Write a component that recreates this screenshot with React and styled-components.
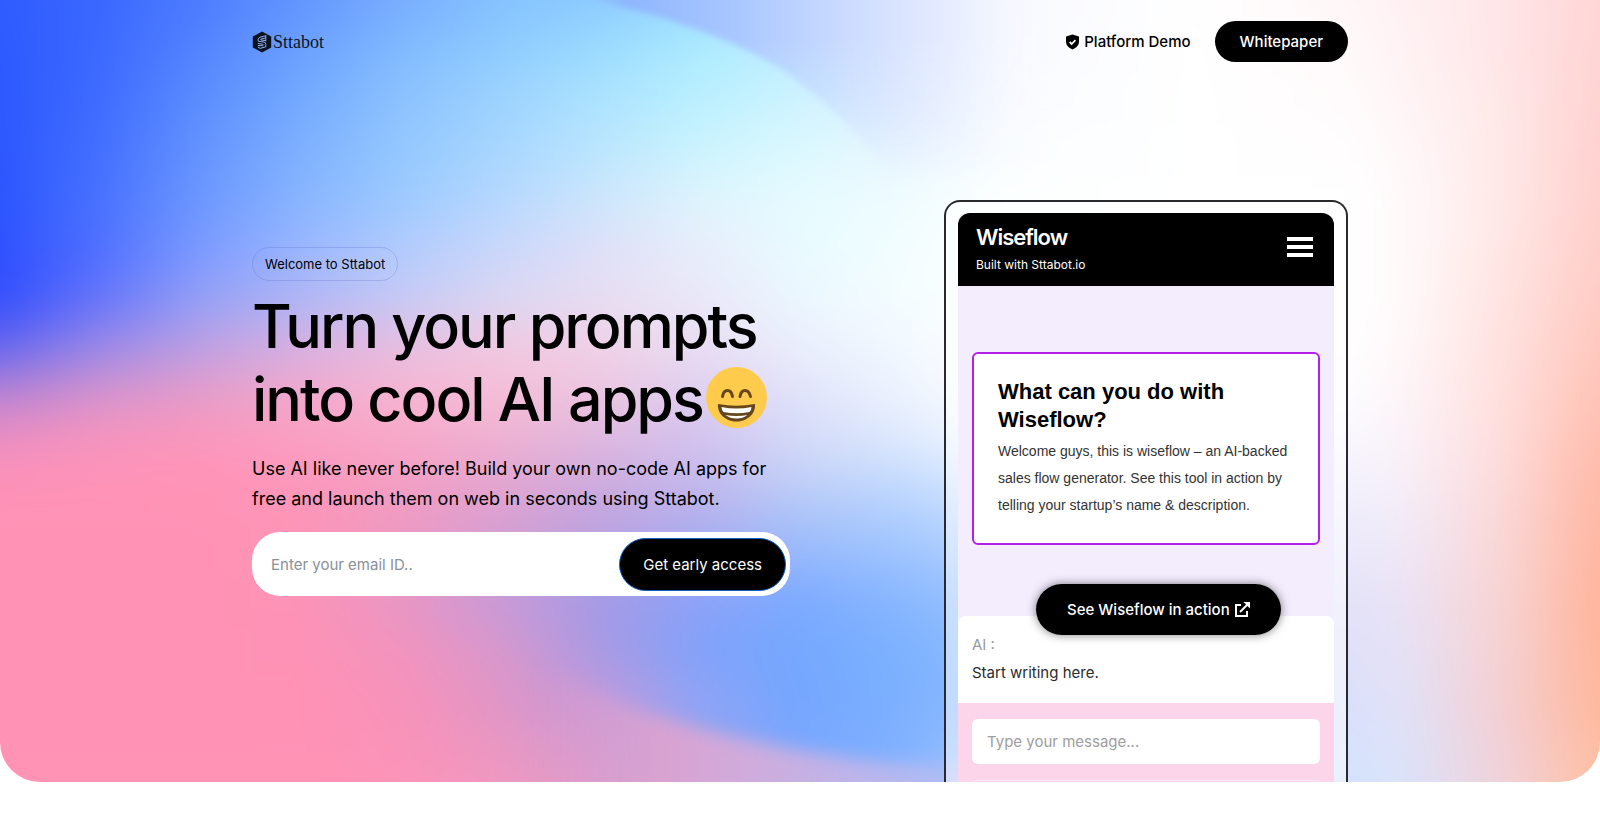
import React from "react";
import styled, { createGlobalStyle } from "styled-components";

const GlobalStyle = createGlobalStyle`
  *, *::before, *::after { box-sizing: border-box; }
  body {
    margin: 0;
    background: #fff;
    color: #000;
    font-family: Inter, "Liberation Sans", sans-serif;
  }
  h1, h2, p { margin: 0; }
  button, input { font: inherit; letter-spacing: inherit; }
`;

/* Colour mesh behind the hero: each row is a horizontal gradient that fades into the next one. */
const COLUMNS = [0, 100, 200, 300, 400, 500, 600, 700, 800, 900, 1000, 1200, 1350, 1400, 1500, 1600];
const MESH = [
  [0, "#2f5cff #3a68ff #4c7cff #6395ff #78acff #84c2ff #8ccbff #a0dcff #c0e4ff #e6edff #f8f9ff #ffffff #fff6f8 #fff1f3 #ffe6e8 #ffd6d6"],
  [50, "#2d5aff #3c69ff #5484ff #6ca0ff #82bbff #8fccff #9cdcff #acecff #c4eeff #e2edff #f9faff #ffffff #fff9fa #fff3f4 #ffe6e8 #ffd4d4"],
  [100, "#2c58ff #3f6cff #5c8dff #74aaff #8cc2ff #9dd3ff #ade3ff #bbf0ff #cef3ff #e2eeff #f9fbff #ffffff #fffbfc #fff5f6 #ffe8e8 #ffd3d2"],
  [150, "#2c57ff #446fff #6493ff #7eb0ff #93c8ff #a8d6ff #bbe6fe #ccf4fe #dcf9ff #e8f5ff #fafdff #ffffff #fffdfe #fff8f9 #ffe9e8 #ffd1cf"],
  [200, "#2c55ff #4872ff #6c98ff #88b5ff #9dcaff #b6d8ff #cee6fc #dff4fd #e6fbff #effcff #fcffff #ffffff #ffffff #fffafb #ffe9e8 #ffd0cd"],
  [250, "#2d50ff #5070ff #7c9aff #9bb6ff #b2cbfd #cbd7fb #dfe0f7 #e8edfb #e8fbff #f2fdff #feffff #ffffff #ffffff #fffafb #ffe7e5 #ffcec9"],
  [300, "#334efc #6675fa #95a0f6 #b0b6f5 #c6caf5 #dbd7f2 #e8ddf2 #eae8f8 #ebf7ff #f4fdff #ffffff #ffffff #ffffff #fffafb #ffe4e2 #ffcbc4"],
  [350, "#6a68ee #9e8ae6 #c0a0e2 #dab0df #eabddf #f2c7df #f0d0e6 #e9dcf2 #eaeefc #f2f8ff #ffffff #ffffff #fffeff #fff8f9 #ffe2e0 #ffc7bd"],
  [400, "#c286d0 #dc94ca #ea9cc6 #f4a8ca #f7b4d0 #f5bcd6 #ebc4e0 #dccdf0 #dfe2fa #ebf2fe #ffffff #ffffff #fdfcff #fdf5f9 #ffe0df #ffc2b5"],
  [450, "#f490be #fb94bb #fd96ba #fc9cc0 #f7a4c6 #ecaed1 #dab4df #d0c0ee #d0d8f8 #d8e6fd #eef5ff #ffffff #f7f5fe #faf2f9 #fedddd #ffbcac"],
  [500, "#ff92b6 #ff92b6 #ff93b6 #fd96b8 #f29cc2 #dfa2d0 #c8a8de #bcb4ec #b6caf8 #b8d4fe #d0e4ff #f4f6ff #f0effc #f5eef9 #fbdada #ffb8a5"],
  [600, "#ff92b5 #ff92b5 #ff92b5 #fd93b6 #e896c4 #c69ad8 #a49ae6 #8ca2f8 #7caaff #88b6ff #9cc4ff #dce6fe #e4e2f8 #eae3f6 #f8d4d4 #ffb49c"],
  [650, "#ff92b5 #ff92b5 #ff92b5 #fe92b6 #f294be #d898cc #a89ae4 #80a2fa #74a8ff #7cb2ff #90beff #d2e0fe #e0e1f9 #e6e2f7 #f6d2d4 #ffb69b"],
  [700, "#ff92b5 #ff92b5 #ff92b5 #ff92b5 #f892ba #e096c6 #c29adc #8ea4f6 #74a6ff #7cb0ff #8cbaff #c8d8fc #dce0fa #e1e2f8 #f4d0d4 #ffb79b"],
  [783, "#ff93b6 #ff93b6 #ff93b6 #ff93b6 #fc94b8 #f098c0 #dc9ccc #a0a4ee #7ca8fe #82b2ff #b0ccff #c4d6fa #d4e4fc #dae3fa #f0d2dc #ffc0a4"],
].map(([y, colors]) => ({ y, colors: colors.split(" ") }));

const Hero = styled.section`
  display: grid;
  overflow: hidden;
  border-radius: 0 0 40px 40px;
`;

const Backdrop = styled.svg`
  grid-area: 1 / 1;
  width: 100%;
  height: 100%;
  min-height: 0;
  contain: size;
`;

const Content = styled.div`
  grid-area: 1 / 1;
  width: 100%;
  max-width: 1144px;
  margin: 0 auto;
  padding: 0 24px;
  min-width: 0;
`;

const Header = styled.header`
  display: flex;
  align-items: center;
  justify-content: space-between;
  padding: 21px 0;
`;

const Logo = styled.a`
  display: flex;
  align-items: center;
  gap: 1px;
  color: #0b1526;
  font-family: "Liberation Serif", serif;
  font-size: 18px;
  line-height: 20px;
  text-decoration: none;
`;

const Nav = styled.nav`
  display: flex;
  align-items: center;
  gap: 24px;
`;

const NavLink = styled.a`
  display: flex;
  align-items: center;
  gap: 4px;
  color: #000;
  font-size: 15px;
  font-weight: 500;
  line-height: 20px;
  text-decoration: none;
`;

const PillButton = styled.button`
  display: flex;
  align-items: center;
  justify-content: center;
  gap: 4px;
  height: ${(p) => p.$height}px;
  padding: 0 ${(p) => p.$pad}px;
  border: ${(p) => (p.$outlined ? "1px solid #0b5fc4" : "0")};
  border-radius: 28px;
  background: #000;
  color: #fff;
  font-size: 15px;
  font-weight: ${(p) => p.$weight || 500};
  white-space: nowrap;
  cursor: pointer;
`;

const Main = styled.main`
  display: flex;
  justify-content: space-between;
  gap: 48px;
  padding-top: 117px;
`;

const Intro = styled.div`
  flex: 0 1 538px;
  padding-top: 47px;
`;

const Badge = styled.span`
  display: inline-block;
  padding: 0 12px;
  border: 1px solid rgba(80, 100, 190, 0.25);
  border-radius: 17px;
  font-size: 13px;
  line-height: 32px;
`;

const Title = styled.h1`
  padding-top: 9px;
  font-size: 61px;
  font-weight: 500;
  line-height: 73px;
  letter-spacing: -2px;
  white-space: nowrap;
`;

const Lead = styled.p`
  padding-top: 18px;
  font-size: 18px;
  line-height: 30px;
`;

const SignUp = styled.form`
  display: flex;
  align-items: center;
  margin-top: 18px;
  padding: 5px 4px 5px 19px;
  border-radius: 28px;
  background: #fff;
`;

const EmailInput = styled.input`
  flex: 1;
  min-width: 0;
  height: 54px;
  padding: 0;
  border: 0;
  outline: 0;
  background: transparent;
  font-size: 15px;
  &::placeholder { color: #8a9097; opacity: 1; }
`;

const Phone = styled.aside`
  position: relative;
  flex: 0 0 404px;
  padding: 11px 12px 0;
  border: 2px solid #2a2a2e;
  border-bottom: 0;
  border-radius: 16px 16px 0 0;
  background: rgba(255, 255, 255, 0.5);
`;

const Screen = styled.div`
  overflow: hidden;
  border-radius: 12px 12px 0 0;
  background: #f4edfe;
`;

const AppBar = styled.div`
  display: flex;
  align-items: center;
  justify-content: space-between;
  height: 73px;
  padding: 2px 21px 0 18px;
  background: #000;
  color: #fff;
  line-height: 28px;
`;

const AppName = styled.p`
  font-size: 22px;
  font-weight: 600;
  letter-spacing: -1px;
`;

const AppNote = styled.p`
  font-size: 12px;
`;

const MenuButton = styled.button`
  display: grid;
  gap: 4px;
  width: 26px;
  margin-bottom: 8px;
  padding: 0;
  border: 0;
  background: none;
  &::before, &::after { content: ""; }
  &::before, &::after, & > span { height: 4px; background: #fff; }
`;

const Card = styled.section`
  margin: 66px 14px 71px;
  padding: 24px;
  border: 2px solid #b41fe8;
  border-radius: 6px;
  background: #fff;
  font-family: "Liberation Sans", sans-serif;
`;

const CardTitle = styled.h2`
  padding-bottom: 4px;
  font-size: 22px;
  font-weight: 700;
  line-height: 28px;
`;

const CardText = styled.p`
  color: #333;
  font-size: 14px;
  line-height: 27px;
`;

const Reply = styled.div`
  padding: 15px 14px 16px;
  border-radius: 8px 8px 0 0;
  background: #fff;
  color: #2b2b2b;
  font-size: 15px;
  line-height: 28px;
`;

const Speaker = styled.p`
  color: #9a9a9a;
`;

const Composer = styled.div`
  display: grid;
  gap: 16px;
  padding: 16px 14px 0;
  background: #fcd5eb;
`;

const MessageInput = styled.input`
  width: 100%;
  height: 45px;
  padding: 0 15px;
  border: 0;
  border-radius: 6px;
  background: #fff;
  font-size: 15px;
  &::placeholder { color: #9e9e9e; opacity: 1; }
`;

const NextField = styled.div`
  height: 2px;
  border-top: 1px solid #ffe8f5;
  border-radius: 4px 4px 0 0;
`;

const ActionSlot = styled.div`
  position: absolute;
  top: 382px;
  left: 90px;
  border-radius: 28px;
  box-shadow: 0 0 10px rgba(0, 0, 0, 0.5);
`;

function MeshBackdrop() {
  return (
    <Backdrop viewBox="0 0 1600 783" preserveAspectRatio="none" aria-hidden="true">
      <defs>
        {MESH.map(({ y, colors }, i) => (
          <linearGradient key={y} id={`row${i}`} gradientUnits="userSpaceOnUse" x1="0" x2="1600" y1="0" y2="0">
            {colors.map((c, j) => (
              <stop key={j} offset={COLUMNS[j] / 1600} stopColor={c} />
            ))}
          </linearGradient>
        ))}
        {MESH.slice(1).map(({ y }, i) => (
          <React.Fragment key={y}>
            <linearGradient id={`fade${i + 1}`} gradientUnits="userSpaceOnUse" x1="0" x2="0" y1={MESH[i].y} y2={y}>
              <stop offset="0" stopColor="#fff" stopOpacity="0" />
              <stop offset="1" stopColor="#fff" />
            </linearGradient>
            <mask id={`mask${i + 1}`} maskUnits="userSpaceOnUse" x="-100" y="-100" width="1800" height="983">
              <rect x="-100" y="-100" width="1800" height="983" fill={`url(#fade${i + 1})`} />
            </mask>
          </React.Fragment>
        ))}
        <filter id="soft" filterUnits="userSpaceOnUse" x="-100" y="-100" width="1800" height="983" colorInterpolationFilters="sRGB">
          <feGaussianBlur stdDeviation="18" />
        </filter>
        <filter id="edge" filterUnits="userSpaceOnUse" x="-100" y="-100" width="1800" height="983" colorInterpolationFilters="sRGB">
          <feGaussianBlur stdDeviation="3" />
        </filter>
        <filter id="edgeWide" filterUnits="userSpaceOnUse" x="-100" y="-100" width="1800" height="1083" colorInterpolationFilters="sRGB">
          <feGaussianBlur stdDeviation="9" />
        </filter>
        <linearGradient id="sky" gradientUnits="userSpaceOnUse" x1="560" y1="0" x2="1060" y2="0">
          <stop offset="0" stopColor="#84b8ff" stopOpacity="0.2" />
          <stop offset="0.14" stopColor="#8fb6fd" />
          <stop offset="0.36" stopColor="#aac8ff" />
          <stop offset="0.57" stopColor="#cbdbff" />
          <stop offset="0.76" stopColor="#e4ebff" />
          <stop offset="1" stopColor="#fbfcff" stopOpacity="0" />
        </linearGradient>
        <linearGradient id="skyFade" gradientUnits="userSpaceOnUse" x1="0" y1="40" x2="0" y2="180">
          <stop offset="0" stopColor="#fff" />
          <stop offset="1" stopColor="#fff" stopOpacity="0" />
        </linearGradient>
        <mask id="skyMask" maskUnits="userSpaceOnUse" x="400" y="-100" width="800" height="400">
          <rect x="400" y="-100" width="800" height="400" fill="url(#skyFade)" />
        </mask>
        <linearGradient id="shore" gradientUnits="userSpaceOnUse" x1="540" y1="0" x2="1000" y2="0">
          <stop offset="0" stopColor="#e29cc8" stopOpacity="0" />
          <stop offset="0.26" stopColor="#d9a2d0" />
          <stop offset="0.46" stopColor="#cfacdc" />
          <stop offset="0.68" stopColor="#bdb4ea" />
          <stop offset="1" stopColor="#a8c0fa" />
        </linearGradient>
      </defs>
      <g filter="url(#soft)">
        {MESH.map(({ y }, i) => (
          <rect
            key={y}
            x="-100"
            y="-100"
            width="1800"
            height="983"
            fill={`url(#row${i})`}
            mask={i ? `url(#mask${i})` : undefined}
          />
        ))}
      </g>
      <g mask="url(#skyMask)">
        <path
          d="M540 -20 C580 -4 610 4 657 16 C713 34 753 50 790 75 C820 98 850 124 880 160 L920 220 H1100 V-60 H540Z"
          fill="url(#sky)"
          filter="url(#edge)"
        />
      </g>
      <path
        d="M520 650 C570 680 610 702 650 715 C700 731 760 746 858 760 C900 765 943 767 1000 768 V840 H520Z"
        fill="url(#shore)"
        filter="url(#edgeWide)"
      />
    </Backdrop>
  );
}

function LogoMark() {
  return (
    <svg width="20" height="22" viewBox="0 0 20 22" aria-hidden="true">
      <path d="M10 0.5 19.2 5.6v10.8L10 21.5 0.8 16.4V5.6Z" fill="#0b1220" />
      <g fill="none" stroke="#8fb0ee" strokeWidth="1" strokeLinecap="round" strokeLinejoin="round">
        <path d="M13.500 4.800 8 6.200Q6.200 7 6.200 8.800v1.400l5.800.8q1.800.4 1.800 2.200v2.600l-5.600 1.600-2-1.200" />
        <path d="M13.500 7 9 8v1l4.500.6M6.300 12.500l4.700.8M6.300 14.500l4.700.3M13.800 4.800v5" />
      </g>
    </svg>
  );
}

function ShieldIcon() {
  return (
    <svg width="15" height="16" viewBox="0 0 15 16" aria-hidden="true">
      <path d="M7.500.6 14 2.600V7.500c0 3.700-2.600 6.400-6.500 8C3.600 13.900 1 11.200 1 7.500V2.600Z" fill="#000" />
      <path d="m4.700 8 2 2 3.700-3.900" fill="none" stroke="#fff" strokeWidth="1.800" />
    </svg>
  );
}

function ExternalIcon() {
  return (
    <svg width="16" height="16" viewBox="0 0 16 16" fill="none" stroke="#fff" strokeWidth="2" aria-hidden="true">
      <path d="M7 3H2v11h11V9" />
      <path d="M6 10 13.500 2.500" />
      <path d="M9.500 0H16v6.500Z" fill="#fff" stroke="none" />
    </svg>
  );
}

const EmojiSvg = styled.svg`
  width: 61px;
  height: 61px;
  margin-left: 3px;
  vertical-align: -7px;
`;

function GrinEmoji() {
  return (
    <EmojiSvg viewBox="0 0 61 61" role="img" aria-label="grinning face">
      <circle cx="30.500" cy="30.500" r="30.500" fill="#ffcb4c" />
      <g fill="none" stroke="#65471b" strokeWidth="3" strokeLinecap="round">
        <path d="M16.500 29.500Q17.500 23.500 21.500 23.500T26.500 29.500" />
        <path d="M34 29.500Q35 23.500 39 23.500T44.500 29.500" />
      </g>
      <path d="M12 37Q30.500 40.500 49 37C50 47 41 54.500 30.500 54.500S11 47 12 37Z" fill="#65471b" />
      <path d="M15.500 40Q30.500 43 45.500 40 45.500 43 43.500 45 30.500 47.500 17.500 45 15.500 43 15.500 40Z" fill="#fff" />
      <path d="M19.500 48Q30.500 50 41.500 48 37 51.500 30.500 51.500T19.500 48Z" fill="#fff" />
    </EmojiSvg>
  );
}

export default function App() {
  return (
    <>
      <GlobalStyle />
      <Hero>
        <MeshBackdrop />
        <Content>
          <Header>
            <Logo href="#home">
              <LogoMark />
              Sttabot
            </Logo>
            <Nav>
              <NavLink href="#demo">
                <ShieldIcon />
                Platform Demo
              </NavLink>
              <PillButton type="button" $height={41} $pad={25}>
                Whitepaper
              </PillButton>
            </Nav>
          </Header>
          <Main>
            <Intro>
              <Badge>Welcome to Sttabot</Badge>
              <Title>
                Turn your prompts
                <br />
                into cool AI apps
                <GrinEmoji />
              </Title>
              <Lead>
                Use AI like never before! Build your own no-code AI apps for
                free and launch them on web in seconds using Sttabot.
              </Lead>
              <SignUp onSubmit={(e) => e.preventDefault()}>
                <EmailInput type="email" placeholder="Enter your email ID.." aria-label="Email" />
                <PillButton type="submit" $height={53} $pad={23} $weight={400} $outlined>
                  Get early access
                </PillButton>
              </SignUp>
            </Intro>
            <Phone>
              <Screen>
                <AppBar>
                  <div>
                    <AppName>Wiseflow</AppName>
                    <AppNote>Built with Sttabot.io</AppNote>
                  </div>
                  <MenuButton type="button" aria-label="Menu">
                    <span />
                  </MenuButton>
                </AppBar>
                <Card>
                  <CardTitle>
                    What can you do with
                    <br />
                    Wiseflow?
                  </CardTitle>
                  <CardText>
                    Welcome guys, this is wiseflow – an AI-backed sales flow generator. See this tool in action by
                    telling your startup’s name &amp; description.
                  </CardText>
                </Card>
                <Reply>
                  <Speaker>AI :</Speaker>
                  <p>Start writing here.</p>
                </Reply>
                <Composer>
                  <MessageInput type="text" placeholder="Type your message..." aria-label="Message" />
                  <NextField />
                </Composer>
              </Screen>
              <ActionSlot>
                <PillButton type="button" $height={51} $pad={31}>
                  See Wiseflow in action
                  <ExternalIcon />
                </PillButton>
              </ActionSlot>
            </Phone>
          </Main>
        </Content>
      </Hero>
    </>
  );
}
